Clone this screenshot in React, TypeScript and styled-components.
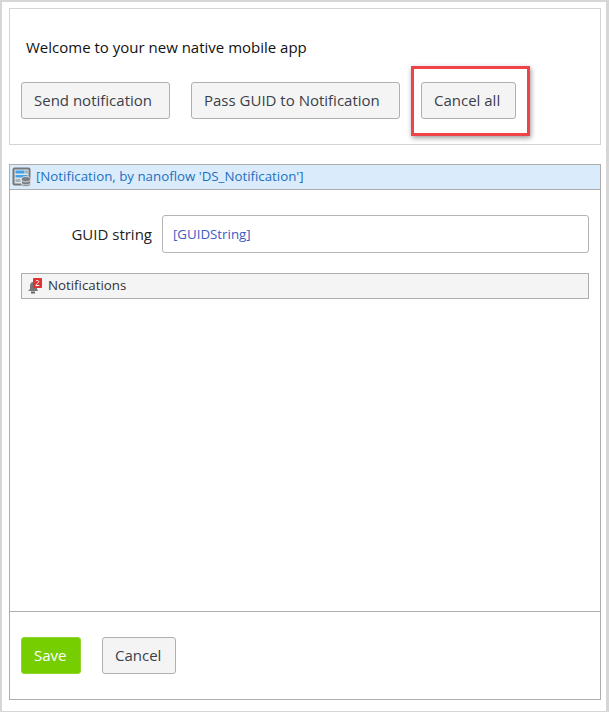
import { createGlobalStyle, styled } from 'styled-components';

const GlobalStyle = createGlobalStyle`
  html, body {
    margin: 0;
    padding: 0;
    background: #fff;
  }

  * {
    box-sizing: border-box;
  }

  body {
    font-family: 'Open Sans', 'Noto Sans', sans-serif;
    font-size: 15px;
    color: #222;
  }
`;

const Frame = styled.div`
  width: 609px;
  height: 712px;
  border: solid #d6d6d6;
  border-width: 2px 3px 1px 2px;
  padding: 6px 3px 0 7px;
  display: flex;
  flex-direction: column;
  gap: 19px;
`;

const TopPanel = styled.section`
  height: 137px;
  width: 592px;
  border: 1px solid #d4d4d4;
  padding: 28px 11px 0;
`;

const Welcome = styled.p`
  margin: 0 0 25px 5px;
  line-height: 20px;
  color: #111;
`;

const ButtonRow = styled.div`
  display: flex;
  gap: 21px;
`;

const Button = styled.button<{ $width: number }>`
  width: ${(p) => p.$width}px;
  height: 37px;
  padding: 0 0 2px 12px;
  border: 1px solid #b0b0b0;
  border-radius: 3px;
  background: #f4f4f4;
  color: #3a3f4a;
  font: inherit;
  text-align: left;
`;

const SaveButton = styled(Button)`
  background: #76cd00;
  border-color: #8ed62e;
  color: #fff;
`;

const Highlight = styled.div`
  position: relative;

  &::after {
    content: '';
    position: absolute;
    left: -10px;
    right: -14px;
    top: -16px;
    bottom: -17px;
    border: 3px solid #f04349;
    box-shadow: 1px 2px 5px rgba(0, 0, 0, 0.4);
  }
`;

const FormPanel = styled.section`
  width: 592px;
  height: 536px;
  border: 1px solid #adadad;
  display: flex;
  flex-direction: column;
`;

const FormHeader = styled.header`
  height: 25px;
  flex: none;
  display: flex;
  align-items: center;
  gap: 4px;
  padding-left: 2px;
  background: #daecfb;
  border-bottom: 1px solid #adadad;
  color: #1f6fc0;
  font-size: 13.3px;
`;

const HeaderTitle = styled.span`
  margin-top: -2px;
`;

const FormBody = styled.div`
  flex: 1;
  padding: 25px 11px 0;
`;

const FieldRow = styled.div`
  display: flex;
  align-items: center;
  gap: 10px;
  margin-bottom: 20px;
`;

const FieldLabel = styled.label`
  width: 131px;
  text-align: right;
  color: #222;
`;

const FieldInput = styled.div`
  flex: 1;
  height: 38px;
  display: flex;
  align-items: center;
  padding-left: 10px;
  border: 1px solid #b4b4b4;
  border-radius: 3px;
  color: #3b5cc4;
  font-size: 13.3px;
`;

const NotificationBar = styled.div`
  height: 26px;
  display: flex;
  align-items: center;
  gap: 5px;
  padding-left: 5px;
  background: #f4f4f4;
  border: 1px solid #adadad;
  color: #333;
  font-size: 13.3px;
`;

const NotificationLabel = styled.span`
  margin-top: -2px;
`;

const Footer = styled.footer`
  height: 88px;
  flex: none;
  display: flex;
  gap: 21px;
  padding: 25px 11px 0;
  border-top: 1px solid #adadad;
`;

function DataViewIcon() {
  return (
    <svg width='20' height='20' viewBox='0 0 20 20'>
      <rect x='0.5' y='0.5' width='18' height='18' rx='2' fill='#73787c' />
      <rect x='2.5' y='2.5' width='14' height='14' fill='#dfe6ea' />
      <rect x='3.5' y='3.5' width='9' height='3' fill='#45a0e6' />
      <rect x='13' y='3.5' width='3' height='3' fill='#a9b2b8' />
      <rect x='3.5' y='8' width='12' height='2.5' fill='#45a0e6' />
      <rect x='3.5' y='12' width='5' height='3' fill='#a9b2b8' />
      <path d='M9.5 11.5c0-1 2-2 4.5-2s4.5 1 4.5 2v6c0 1-2 2-4.5 2s-4.5-1-4.5-2z' fill='#7b8085' stroke='#dfe6ea' strokeWidth='0.8' />
      <path d='M9.5 13c0 1 2 1.8 4.5 1.8s4.5-.8 4.5-1.8M9.5 16c0 1 2 1.8 4.5 1.8s4.5-.8 4.5-1.8' fill='none' stroke='#dfe6ea' strokeWidth='0.8' />
    </svg>
  );
}

function BellBadgeIcon() {
  return (
    <svg width='16' height='16' viewBox='0 0 16 16'>
      <path d='M6 4c-2 0-3 2-3 4v3l-2 2h10l-1-2V7z' fill='#777' />
      <rect x='4' y='13.5' width='4' height='2' fill='#666' />
      <rect x='6' y='0' width='9' height='10' rx='1' fill='#dd3333' />
      <path d='M8.8 3.2c.4-1 2.8-1 3 .3.1 1-2.6 2.6-3 4h3.4' fill='none' stroke='#fff' strokeWidth='1' />
    </svg>
  );
}

export default function App() {
  return (
    <>
      <GlobalStyle />
      <Frame>
        <TopPanel>
          <Welcome>Welcome to your new native mobile app</Welcome>
          <ButtonRow>
            <Button $width={149}>Send notification</Button>
            <Button $width={209}>Pass GUID to Notification</Button>
            <Highlight>
              <Button $width={95}>Cancel all</Button>
            </Highlight>
          </ButtonRow>
        </TopPanel>

        <FormPanel>
          <FormHeader>
            <DataViewIcon />
            <HeaderTitle>[Notification, by nanoflow 'DS_Notification']</HeaderTitle>
          </FormHeader>
          <FormBody>
            <FieldRow>
              <FieldLabel>GUID string</FieldLabel>
              <FieldInput>[GUIDString]</FieldInput>
            </FieldRow>
            <NotificationBar>
              <BellBadgeIcon />
              <NotificationLabel>Notifications</NotificationLabel>
            </NotificationBar>
          </FormBody>
          <Footer>
            <SaveButton $width={60}>Save</SaveButton>
            <Button $width={74}>Cancel</Button>
          </Footer>
        </FormPanel>
      </Frame>
    </>
  );
}
